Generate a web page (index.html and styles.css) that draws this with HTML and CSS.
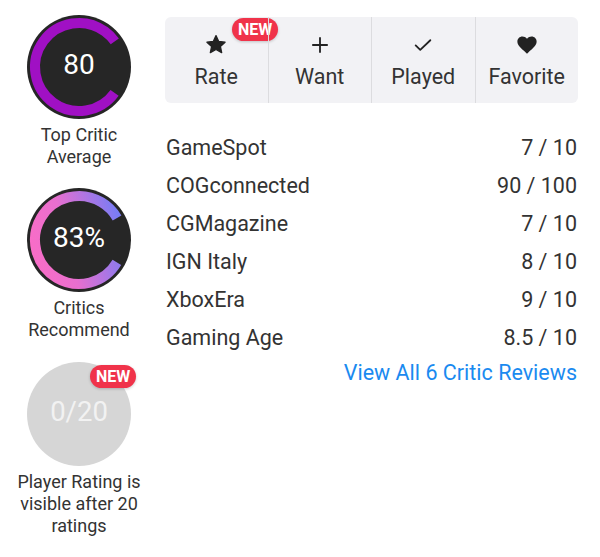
FILE: index.html
```html
<!DOCTYPE html>
<html lang="en">
<head>
<meta charset="utf-8">
<title>Scores</title>
<link rel="stylesheet" href="styles.css">
</head>
<body>
<div class="page">
  <aside class="scores">
    <div class="score">
      <div class="ring">
        <svg class="ring-svg" viewBox="0 0 104 104" width="104" height="104">
          <circle cx="52" cy="52" r="52" class="disc"/>
          <circle cx="52" cy="52" r="44" class="arc arc-purple" stroke-dasharray="221.17 276.46" transform="rotate(36 52 52)"/>
        </svg>
        <span class="value">80</span>
      </div>
      <div class="label">Top Critic<br>Average</div>
    </div>
    <div class="score">
      <div class="ring">
        <svg class="ring-svg" viewBox="0 0 104 104" width="104" height="104">
          <defs>
            <linearGradient id="rec" x1="0" y1="1" x2="1" y2="0">
              <stop offset="0" stop-color="#ff6cc4"/>
              <stop offset="0.4" stop-color="#e86fcf"/>
              <stop offset="0.85" stop-color="#7b7cf4"/>
              <stop offset="1" stop-color="#6f7af6"/>
            </linearGradient>
          </defs>
          <circle cx="52" cy="52" r="52" class="disc"/>
          <circle cx="52" cy="52" r="44" class="arc" stroke="url(#rec)" stroke-dasharray="229.46 276.46" transform="rotate(30.6 52 52)"/>
        </svg>
        <span class="value">83%</span>
      </div>
      <div class="label">Critics<br>Recommend</div>
    </div>
    <div class="score">
      <div class="ring ring-empty">
        <span class="value value-empty">0/20</span>
        <span class="badge badge-ring">NEW</span>
      </div>
      <div class="label">Player Rating is<br>visible after 20<br>ratings</div>
    </div>
  </aside>

  <main class="main">
    <div class="actions">
      <button class="action">
        <svg class="icon" viewBox="0 0 24 24" width="22" height="22"><path d="M12 1.8l3 6.3 6.9.8-5.1 4.7 1.4 6.8L12 16.9l-6.2 3.5 1.4-6.8-5.1-4.7 6.9-.8z" fill="#222" stroke="#222" stroke-width="1.4" stroke-linejoin="round"/></svg>
        <span class="action-label">Rate</span>
        <span class="badge badge-action">NEW</span>
      </button>
      <button class="action">
        <svg class="icon" viewBox="0 0 24 24" width="22" height="22"><path d="M12 3.5v17M3.5 12h17" stroke="#222" stroke-width="2" fill="none"/></svg>
        <span class="action-label">Want</span>
      </button>
      <button class="action">
        <svg class="icon" viewBox="0 0 24 24" width="22" height="22"><path d="M4 12.5l5 4.8L20 6.8" stroke="#222" stroke-width="2" fill="none" stroke-linecap="round" stroke-linejoin="round"/></svg>
        <span class="action-label">Played</span>
      </button>
      <button class="action">
        <svg class="icon" viewBox="0 0 24 24" width="22" height="22"><path d="M12 21.5l-1.4-1.3C5.3 15.5 1.5 12.5 1.5 8.3 1.5 5.2 3.9 2.8 7 2.8c1.9 0 3.7.9 5 2.3 1.3-1.4 3.1-2.3 5-2.3 3.1 0 5.5 2.4 5.5 5.5 0 4.2-3.8 7.2-9.1 11.9z" fill="#222"/></svg>
        <span class="action-label">Favorite</span>
      </button>
    </div>

    <ul class="reviews">
      <li class="review"><span>GameSpot</span><span>7 / 10</span></li>
      <li class="review"><span>COGconnected</span><span>90 / 100</span></li>
      <li class="review"><span>CGMagazine</span><span>7 / 10</span></li>
      <li class="review"><span>IGN Italy</span><span>8 / 10</span></li>
      <li class="review"><span>XboxEra</span><span>9 / 10</span></li>
      <li class="review"><span>Gaming Age</span><span>8.5 / 10</span></li>
    </ul>
    <a class="view-all" href="#">View All 6 Critic Reviews</a>
  </main>
</div>
</body>
</html>
```

FILE: styles.css
```css
* { box-sizing: border-box; }

body {
  margin: 0;
  background: #ffffff;
  font-family: Roboto, "Noto Sans", "Liberation Sans", sans-serif;
  color: #333333;
}

.page {
  display: flex;
  padding-top: 15px;
}

.scores {
  width: 158px;
  display: flex;
  flex-direction: column;
  align-items: center;
  gap: 20px;
}

.score {
  display: flex;
  flex-direction: column;
  align-items: center;
}

.score + .score + .score {
  margin-top: 1px;
}

.ring {
  position: relative;
  width: 104px;
  height: 104px;
  display: flex;
  align-items: center;
  justify-content: center;
}

.ring-svg {
  position: absolute;
  inset: 0;
}

.disc { fill: #262626; }

.arc {
  fill: none;
  stroke-width: 10;
}

.arc-purple { stroke: #a010c4; }

.value {
  position: relative;
  color: #ffffff;
  font-size: 28px;
  margin-bottom: 5px;
}

.ring-empty {
  background: #d6d6d6;
  border-radius: 50%;
}

.value-empty {
  color: #f2f2f2;
  font-size: 27.5px;
}

.label {
  margin-top: 5px;
  font-size: 18px;
  line-height: 22px;
  text-align: center;
  color: #333333;
  white-space: nowrap;
}

.badge {
  position: absolute;
  background: #f0334a;
  color: #ffffff;
  font-weight: 700;
  font-size: 16px;
  line-height: 23px;
  height: 23px;
  padding: 0 6px;
  border-radius: 12px;
  box-shadow: 0 1px 3px rgba(0,0,0,0.2);
}

.badge-ring {
  top: 3px;
  left: 63px;
}

.badge-action {
  top: 1px;
  left: 67px;
}

.main {
  margin-left: 7px;
  margin-top: 2px;
  width: 413px;
}

.actions {
  display: flex;
  background: #f2f2f5;
  border-radius: 6px;
  height: 86px;
}

.action {
  position: relative;
  flex: 1;
  display: flex;
  flex-direction: column;
  align-items: center;
  padding: 17px 0 0;
  border: 0;
  background: transparent;
  font: inherit;
  color: #333333;
}

.action + .action {
  border-left: 1px solid #dcdcdf;
}

.icon {
  display: block;
}

.action-label {
  margin-top: 9px;
  font-size: 21.5px;
  line-height: 24px;
}

.reviews {
  list-style: none;
  margin: 26px 0 0;
  padding: 0;
}

.review {
  display: flex;
  justify-content: space-between;
  font-size: 21.5px;
  line-height: 24px;
  padding: 7px 1px;
  color: #333333;
}

.view-all {
  display: block;
  text-align: right;
  margin-top: 4px;
  padding-right: 1px;
  font-size: 21.5px;
  line-height: 24px;
  color: #1a8af0;
  text-decoration: none;
}
```
